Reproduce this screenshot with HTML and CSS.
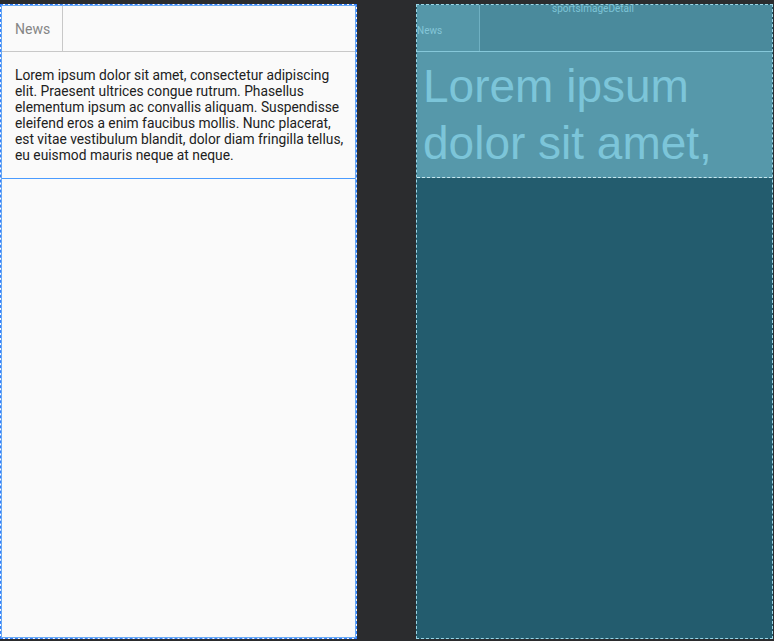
FILE: index.html
```html
<!DOCTYPE html>
<html>
<head>
<meta charset="utf-8">
<link rel="stylesheet" href="styles.css">
</head>
<body>
<div class="canvas">
  <div class="design">
    <div class="d-toolbar">
      <div class="d-tab">News</div>
    </div>
    <div class="d-body">
      <p class="d-text">Lorem ipsum dolor sit amet, consectetur adipiscing elit. Praesent ultrices congue rutrum. Phasellus elementum ipsum ac convallis aliquam. Suspendisse eleifend eros a enim faucibus mollis. Nunc placerat, est vitae vestibulum blandit, dolor diam fringilla tellus, eu euismod mauris neque at neque.</p>
    </div>
    <div class="d-rest"></div>
  </div>
  <div class="blueprint">
    <div class="b-label">sportsImageDetail</div>
    <div class="b-toolbar">
      <div class="b-tab">News</div>
    </div>
    <div class="b-body">
      <p class="b-text">Lorem ipsum dolor sit amet,</p>
    </div>
    <div class="b-rest"></div>
  </div>
</div>
</body>
</html>
```
FILE: styles.css
```css
html, body {
  margin: 0;
  padding: 0;
  background: #2b2c2e;
  width: 774px;
  height: 641px;
  overflow: hidden;
}
.canvas {
  display: flex;
  gap: 59px;
  padding-top: 4px;
  height: 635px;
}
.design {
  width: 357px;
  height: 635px;
  box-sizing: border-box;
  background: #fafafa;
  border: 1px dashed #2f7fff;
  outline: 1px solid #6aa8f0;
  outline-offset: -2px;
  display: flex;
  flex-direction: column;
}
.d-toolbar {
  height: 46px;
  border-bottom: 1px solid #c8c8c8;
  display: flex;
}
.d-tab {
  width: 62px;
  border-right: 1px solid #c8c8c8;
  font-family: Roboto, sans-serif;
  font-size: 14px;
  color: #858585;
  display: flex;
  align-items: center;
  padding-left: 14px;
  padding-top: 2px;
  box-sizing: border-box;
}
.d-body {
  height: 127px;
  border-bottom: 1px solid #4a9bff;
  box-sizing: border-box;
  padding: 15px 4px 0 14px;
}
.d-text {
  margin: 0;
  font-family: Roboto, sans-serif;
  font-size: 13.8px;
  line-height: 16px;
  color: #212121;
}
.d-rest {
  flex: 1;
}
.blueprint {
  position: relative;
  width: 357px;
  height: 635px;
  box-sizing: border-box;
  background: #235c6e;
  border: 1px dashed #9ad6e6;
  display: flex;
  flex-direction: column;
}
.b-label {
  position: absolute;
  top: -1px;
  left: 135px;
  font-family: Roboto, sans-serif;
  font-size: 10px;
  line-height: 10px;
  color: #7cc3d6;
}
.b-toolbar {
  height: 46px;
  background: #4a8a9c;
  border-bottom: 1px solid #86c8da;
  display: flex;
}
.b-tab {
  width: 63px;
  border-right: 1px solid #6fb0c2;
  background: #5597a9;
  font-family: Roboto, sans-serif;
  font-size: 10px;
  color: #84c6d8;
  display: flex;
  align-items: center;
  padding-top: 4px;
  box-sizing: border-box;
}
.b-body {
  height: 126px;
  background: #5698aa;
  border-bottom: 1px dashed #c8e8f0;
  box-sizing: border-box;
  padding: 6px 0 0 6px;
  overflow: hidden;
}
.b-text {
  margin: 0;
  width: 300px;
  font-family: "Liberation Sans", Arial, sans-serif;
  font-size: 46px;
  line-height: 57px;
  color: #7cc5d9;
}
.b-rest {
  flex: 1;
}
```
